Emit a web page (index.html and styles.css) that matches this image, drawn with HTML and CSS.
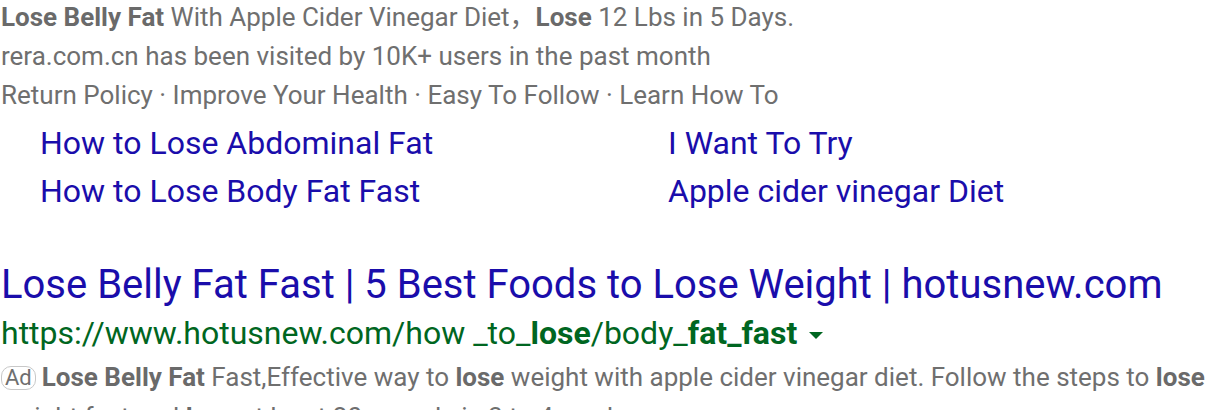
FILE: index.html
```html
<!DOCTYPE html>
<html lang="en">
<head>
<meta charset="utf-8">
<link rel="stylesheet" href="styles.css">
</head>
<body>
<div class="result">
  <div class="ad-top">
    <div class="line"><b>Lose Belly Fat</b> With Apple Cider Vinegar Diet，<b>Lose</b> 12 Lbs in 5 Days.</div>
    <div class="line">rera.com.cn has been visited by 10K+ users in the past month</div>
    <div class="line">Return Policy · Improve Your Health · Easy To Follow · Learn How To</div>
  </div>
  <div class="sitelinks">
    <a class="sitelink">How to Lose Abdominal Fat</a>
    <a class="sitelink">I Want To Try</a>
    <a class="sitelink">How to Lose Body Fat Fast</a>
    <a class="sitelink">Apple cider vinegar Diet</a>
  </div>
  <div class="entry">
    <a class="title">Lose Belly Fat Fast | 5 Best Foods to Lose Weight | hotusnew.com</a>
    <div class="url">https://www.hotusnew.com/how _to_<b>lose</b>/body_<b>fat_fast</b><span class="caret"></span></div>
    <div class="desc"><span class="badge">Ad</span><b>Lose Belly Fat</b> Fast,Effective way to <b>lose</b> weight with apple cider vinegar diet. Follow the steps to <b>lose</b><br>weight fast and <b>lose</b> at least 20 pounds in 3 to 4 weeks.</div>
  </div>
</div>
</body>
</html>
```
FILE: styles.css
```css
html, body {
  margin: 0;
  padding: 0;
  background: #fff;
}
body {
  font-family: Roboto, "Noto Sans CJK SC", Arial, sans-serif;
  overflow: hidden;
  height: 410px;
}
.result {
  padding-left: 1px;
}
.ad-top {
  color: #6f6f6f;
  font-size: 26px;
  line-height: 39px;
  margin-top: -2px;
  white-space: nowrap;
}
.ad-top b {
  color: #6a6a6a;
}
.sitelinks {
  display: grid;
  grid-template-columns: 628px auto;
  padding-left: 39px;
  margin-top: 4px;
  font-size: 32px;
  line-height: 48px;
}
.sitelink {
  color: #1a0dab;
}
.entry {
  margin-top: 45px;
}
.title {
  display: block;
  color: #1a0dab;
  font-size: 40px;
  line-height: 50px;
  white-space: nowrap;
}
.url {
  color: #006621;
  font-size: 32px;
  line-height: 47px;
  white-space: nowrap;
}
.caret {
  display: inline-block;
  margin-left: 12px;
  vertical-align: middle;
  border-left: 7px solid transparent;
  border-right: 7px solid transparent;
  border-top: 7px solid #006621;
}
.desc {
  color: #6f6f6f;
  font-size: 26px;
  line-height: 40px;
  white-space: nowrap;
}
.desc b {
  color: #6a6a6a;
}
.badge {
  display: inline-block;
  border: 1px solid #c8c8c8;
  border-radius: 10px;
  font-size: 22px;
  line-height: 22px;
  padding: 0 3px;
  margin-right: 6px;
  color: #6f6f6f;
  vertical-align: 1px;
}
```
